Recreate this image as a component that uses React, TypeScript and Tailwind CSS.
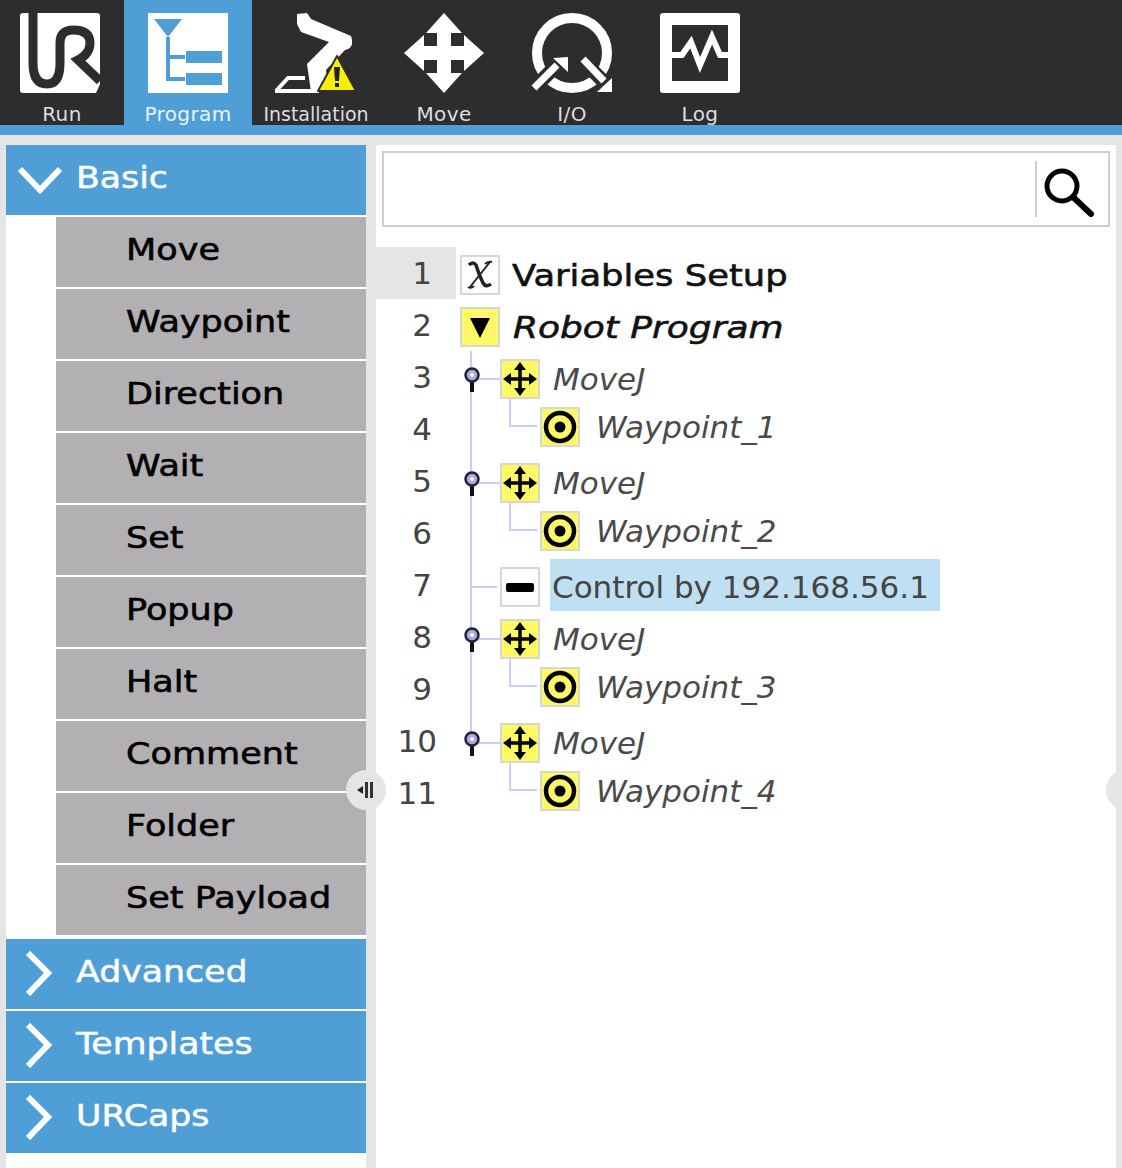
import React from "react";

const FONT = "font-['DejaVu_Sans',sans-serif]";

function NavTab({ label, active, narrow, small, children }: { label: string; active?: boolean; narrow?: boolean; small?: boolean; children: React.ReactNode }) {
  return (
    <div className={`${narrow ? "w-[124px]" : "w-[128px]"} h-[125px] flex flex-col items-center ${active ? "bg-[#4f9fd6] text-[#e8f3fa]" : "text-[#dedede]"}`}>
      <div className="h-[80px] w-[100px] mt-[13px] flex justify-center">{children}</div>
      <div className={`mt-[9px] leading-[24px] whitespace-nowrap ${small ? "text-[19px]" : "text-[20px] tracking-[0.4px]"}`}>{label}</div>
    </div>
  );
}

const URLogo = () => (
  <svg width="80" height="80" viewBox="0 0 80 80">
    <path d="M3 0H77Q80 0 80 3V71L76 80H3Q0 80 0 77V3Q0 0 3 0Z" fill="#fff" />
    <path d="M13 0V50Q13 71 27 71Q40 71 40 50V30Q40 17 53 17Q70 17 70 30Q70 41 58 47L80 68" fill="none" stroke="#2d2d2d" strokeWidth="9" />
  </svg>
);

const ProgramIcon = () => (
  <svg width="80" height="80" viewBox="0 0 80 80">
    <rect width="80" height="80" fill="#fff" />
    <path d="M6 6H34L20 24Z" fill="#4f9fd6" />
    <path d="M20 24V66H37M20 44H37" fill="none" stroke="#4f9fd6" strokeWidth="4" />
    <rect x="38" y="38" width="36" height="12" fill="#4f9fd6" />
    <rect x="38" y="60" width="36" height="12" fill="#4f9fd6" />
  </svg>
);

const InstallationIcon = () => (
  <svg width="90" height="84" viewBox="0 0 90 84">
    <path d="M26 2L36 1L40 7L80 24Q84 36 74 38L55 58L58 80H40L36 52L58 30L30 20L26 12Z" fill="#fff" />
    <path d="M5 79L17 66H34" fill="none" stroke="#fff" strokeWidth="4" />
    <path d="M4 79H48" fill="none" stroke="#fff" strokeWidth="4" />
    <path d="M66 44L85 79H47Z" fill="#f7ee00" stroke="#2d2d2d" strokeWidth="2" strokeLinejoin="round" />
    <path d="M63 55H69L68 69H64Z" fill="#222" />
    <rect x="64" y="71" width="4" height="4" fill="#222" />
  </svg>
);

const MoveIcon = () => (
  <svg width="80" height="80" viewBox="0 0 80 80">
    <path
      fill="#fff"
      d="M40 0L58 20H47V33H60V22L80 40L60 58V47H47V60H58L40 80L22 60H33V47H20V58L0 40L20 22V33H33V20H22Z"
    />
  </svg>
);

const IOIcon = () => (
  <svg width="84" height="80" viewBox="0 0 84 80">
    <circle cx="42" cy="40" r="35" fill="none" stroke="#fff" strokeWidth="10" />
    <path d="M0 79L38 41M46 41L84 79" stroke="#2d2d2d" strokeWidth="14" />
    <path d="M4 75L27 52" stroke="#fff" strokeWidth="7" />
    <path d="M38 44L23 45L38 59Z" fill="#fff" />
    <path d="M53 46L74 68" stroke="#fff" strokeWidth="7" />
    <path d="M82 79L82 65L67 79Z" fill="#fff" />
  </svg>
);

const LogIcon = () => (
  <svg width="80" height="80" viewBox="0 0 80 80">
    <rect width="80" height="80" rx="3" fill="#fff" />
    <rect x="12" y="12" width="56" height="56" fill="#2d2d2d" />
    <path d="M12 42H22L31 29L40 52L52 24L60 42H68" fill="none" stroke="#fff" strokeWidth="6" />
  </svg>
);

function Chevron({ open }: { open?: boolean }) {
  return open ? (
    <svg width="46" height="30" viewBox="0 0 46 30" className="ml-[11px] mt-[2px]">
      <path d="M3 3L23 24L43 3" fill="none" stroke="#fff" strokeWidth="6" />
    </svg>
  ) : (
    <svg width="28" height="46" viewBox="0 0 28 46" className="ml-[19px]">
      <path d="M3 2L23 22L3 43" fill="none" stroke="#fff" strokeWidth="6" />
    </svg>
  );
}

function GroupHeader({ label, open }: { label: string; open?: boolean }) {
  return (
    <div className="h-[70px] bg-[#4f9fd6] flex items-center relative text-white">
      <Chevron open={open} />
      <span className="absolute left-[70px] top-[14px] origin-left scale-x-[1.12] text-[31px] leading-[36px] [-webkit-text-stroke:0.5px_#fff]">{label}</span>
    </div>
  );
}

const items = ["Move", "Waypoint", "Direction", "Wait", "Set", "Popup", "Halt", "Comment", "Folder", "Set Payload"];

function TreeIcon({ kind }: { kind: "var" | "down" | "move" | "wp" | "dash" }) {
  const yellow = kind === "down" || kind === "move" || kind === "wp";
  return (
    <div className={`w-[40px] h-[40px] shrink-0 border-2 border-[#d8d8d0] flex items-center justify-center ${yellow ? "bg-[#fdf966]" : "bg-white"}`}>
      {kind === "var" && (
        <svg width="32" height="32" viewBox="0 0 32 32">
          <path d="M5 6Q9 2 12 6Q15 16 19 24Q22 29 27 25" fill="none" stroke="#222" strokeWidth="3.5" />
          <path d="M26 3L6 28" stroke="#222" strokeWidth="2" />
          <path d="M21 5Q24 2 28 3M4 28Q7 30 10 27" fill="none" stroke="#222" strokeWidth="2" />
        </svg>
      )}
      {kind === "down" && (
        <svg width="24" height="24" viewBox="0 0 24 24"><path d="M2 3H22L12 23Z" fill="#000" /></svg>
      )}
      {kind === "move" && (
        <svg width="34" height="34" viewBox="0 0 34 34">
          <path d="M17 4V30M4 17H30" stroke="#000" strokeWidth="3.5" />
          <path d="M17 0L23 8H11ZM17 34L23 26H11ZM0 17L8 11V23ZM34 17L26 11V23Z" fill="#000" />
        </svg>
      )}
      {kind === "wp" && (
        <svg width="34" height="34" viewBox="0 0 34 34">
          <circle cx="17" cy="17" r="14" fill="none" stroke="#000" strokeWidth="4.5" />
          <circle cx="17" cy="17" r="5.5" fill="#000" />
        </svg>
      )}
      {kind === "dash" && <div className="w-[28px] h-[9px] rounded-[2px] bg-black" />}
    </div>
  );
}

const Pin = () => (
  <svg width="18" height="28" viewBox="0 0 18 28" className="absolute left-[87px] top-[13px]">
    <path d="M9 14V26" stroke="#111" strokeWidth="4" />
    <circle cx="9" cy="9" r="6.5" fill="#aaaae0" stroke="#223" strokeWidth="2.5" />
    <circle cx="9" cy="9" r="2" fill="#fff" />
  </svg>
);

type RowDef = {
  n: number;
  kind: "var" | "down" | "move" | "wp" | "dash";
  text: string;
  style: "bold" | "boldItalic" | "italic" | "selected";
  indent: string;
  child?: boolean;
};

const rows: RowDef[] = [
  { n: 1, kind: "var", text: "Variables Setup", style: "bold", indent: "ml-[4px]" },
  { n: 2, kind: "down", text: "Robot Program", style: "boldItalic", indent: "ml-[4px]" },
  { n: 3, kind: "move", text: "MoveJ", style: "italic", indent: "ml-[44px]" },
  { n: 4, kind: "wp", text: "Waypoint_1", style: "italic", indent: "ml-[84px]", child: true },
  { n: 5, kind: "move", text: "MoveJ", style: "italic", indent: "ml-[44px]" },
  { n: 6, kind: "wp", text: "Waypoint_2", style: "italic", indent: "ml-[84px]", child: true },
  { n: 7, kind: "dash", text: "Control by 192.168.56.1", style: "selected", indent: "ml-[44px]" },
  { n: 8, kind: "move", text: "MoveJ", style: "italic", indent: "ml-[44px]" },
  { n: 9, kind: "wp", text: "Waypoint_3", style: "italic", indent: "ml-[84px]", child: true },
  { n: 10, kind: "move", text: "MoveJ", style: "italic", indent: "ml-[44px]" },
  { n: 11, kind: "wp", text: "Waypoint_4", style: "italic", indent: "ml-[84px]", child: true },
];

function TreeRow({ row }: { row: RowDef }) {
  const textClass = {
    bold: "ml-[12px] origin-left scale-x-[1.14] text-[#111] [-webkit-text-stroke:0.6px_#111]",
    boldItalic: "ml-[13px] origin-left scale-x-[1.16] italic text-[#111] [-webkit-text-stroke:0.6px_#111]",
    italic: row.child ? "ml-[16px] italic text-[#4a4a4a]" : "ml-[13px] italic text-[#4a4a4a]",
    selected: "ml-[10px] -mt-1 w-[390px] h-[52px] bg-[#bfdff3] pl-[2px] leading-[56px] text-[#444] whitespace-nowrap",
  }[row.style];
  return (
    <div className="relative h-[52px] flex items-center">
      <div
        className={`w-[80px] h-[52px] shrink-0 -mt-1 flex items-center justify-end text-[#444] text-[31px] ${
          row.n >= 10 ? "pr-[19px]" : "pr-[24px]"
        } ${row.n === 1 ? "bg-[#e5e5e5]" : ""}`}
      >
        {row.n}
      </div>
      {row.kind === "move" && <div className="absolute left-[96px] top-[25px] w-[28px] h-[2px] bg-[#ccccff]" />}
      {row.kind === "dash" && <div className="absolute left-[95px] top-[25px] w-[26px] h-[2px] bg-[#ccccff]" />}
      {row.kind === "move" && <Pin />}
      {row.child && <div className="absolute left-[133px] top-[-6px] w-[28px] h-[28px] border-l-2 border-b-2 border-[#ccccff]" />}
      <div className={`flex items-center relative ${row.indent} ${row.child ? "-mt-2" : ""}`}>
        <TreeIcon kind={row.kind} />
        <span className={`text-[31px] whitespace-nowrap leading-[40px] ${textClass}`}>{row.text}</span>
      </div>
    </div>
  );
}

export default function App() {
  return (
    <div className={`w-[1122px] h-[1168px] bg-[#e5e5e5] overflow-hidden flex flex-col ${FONT}`}>
      <header className="h-[125px] shrink-0 bg-[#2d2d2d] flex">
        <NavTab label="Run" narrow><div className="-ml-[4px]"><URLogo /></div></NavTab>
        <NavTab label="Program" active><ProgramIcon /></NavTab>
        <NavTab label="Installation" small><div className="mt-[-1px]"><InstallationIcon /></div></NavTab>
        <NavTab label="Move"><MoveIcon /></NavTab>
        <NavTab label="I/O"><IOIcon /></NavTab>
        <NavTab label="Log"><LogIcon /></NavTab>
      </header>
      <div className="h-[10px] shrink-0 bg-[#4f9fd6]" />
      <main className="flex-1 flex pt-[10px] pl-[6px] pr-[6px] gap-[10px] relative">
        <aside className="w-[360px] bg-white flex flex-col">
          <GroupHeader label="Basic" open />
          <div className="flex flex-col gap-[2px] pt-[2px] pl-[50px]">
            {items.map((t) => (
              <div key={t} className="h-[70px] bg-[#b2b0b2] pl-[70px] flex items-center text-black pb-[6px]">
                <span className="origin-left scale-x-[1.13] text-[31px] [-webkit-text-stroke:0.6px_#000]">{t}</span>
              </div>
            ))}
          </div>
          <div className="mt-[4px] flex flex-col gap-[2px]">
            <GroupHeader label="Advanced" />
            <GroupHeader label="Templates" />
            <GroupHeader label="URCaps" />
          </div>
        </aside>
        <section className="flex-1 bg-white flex flex-col relative">
          <div className="mx-[6px] mt-[6px] h-[76px] shrink-0 border-2 border-[#cfcfcf] flex items-center justify-end">
            <div className="w-[2px] h-[56px] bg-[#cfcfcf] mr-[5px]" />
            <svg width="52" height="50" viewBox="0 0 52 50" className="mr-[14px] mt-[5px]">
              <circle cx="20" cy="19" r="15" fill="none" stroke="#000" strokeWidth="5" />
              <path d="M31 30L49 47" stroke="#000" strokeWidth="6" strokeLinecap="round" />
            </svg>
          </div>
          <div className="mt-[22px] relative">
            <div className="absolute left-[94px] top-[102px] w-[2px] h-[402px] bg-[#ccccff]" />
            {rows.map((r) => (
              <TreeRow key={r.n} row={r} />
            ))}
          </div>
        </section>
        <div className="absolute left-[346px] top-[635px] w-[40px] h-[40px] rounded-full bg-[#e5e5e5] flex items-center justify-center gap-[2px]">
          <svg width="18" height="16" viewBox="0 0 18 16">
            <path d="M0 8L6 4V12Z" fill="#222" />
            <rect x="8" y="0" width="3" height="16" fill="#333" />
            <rect x="13" y="0" width="3" height="16" fill="#333" />
          </svg>
        </div>
        <div className="absolute left-[1106px] top-[635px] w-[40px] h-[40px] rounded-full bg-[#e5e5e5]" />
      </main>
    </div>
  );
}
